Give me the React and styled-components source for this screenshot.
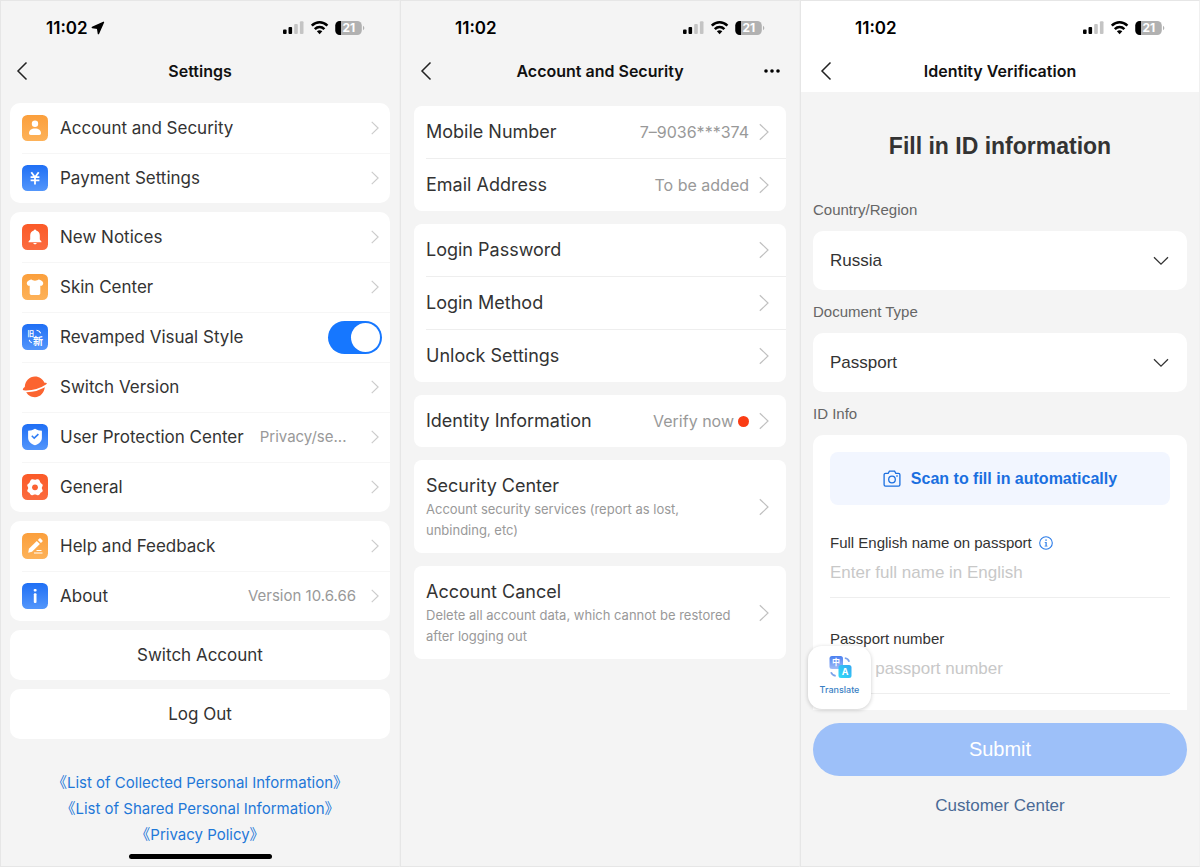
import styled, { createGlobalStyle } from 'styled-components';

const notices = [
    { icon: 'bell', label: 'New Notices' },
    { icon: 'shirt', label: 'Skin Center' },
    { icon: 'revamp', label: 'Revamped Visual Style', toggle: true },
    { icon: 'planet', label: 'Switch Version' },
    { icon: 'shield', label: 'User Protection Center', value: 'Privacy/se...', start: true },
    { icon: 'gear', label: 'General' },
];

const settings = [
    [
        { icon: 'user', label: 'Account and Security' },
        { icon: 'yen', label: 'Payment Settings' },
    ],
    notices,
    [
        { icon: 'pencil', label: 'Help and Feedback' },
        { icon: 'info', label: 'About', value: 'Version 10.6.66' },
    ],
];

const security = [
    [
        { label: 'Mobile Number', value: '7–9036***374' },
        { label: 'Email Address', value: 'To be added' },
    ],
    [
        { label: 'Login Password' },
        { label: 'Login Method' },
        { label: 'Unlock Settings' },
    ],
    [{ label: 'Identity Information', value: 'Verify now', dot: true }],
    [{ label: 'Security Center', note: 'Account security services (report as lost, unbinding, etc)' }],
    [{ label: 'Account Cancel', note: 'Delete all account data, which cannot be restored after logging out' }],
];

const policies = [
    '《List of Collected Personal Information》',
    '《List of Shared Personal Information》',
    '《Privacy Policy》',
];

const tiles = {
    orange: ['#fb9f3c', '#fdb259'],
    red: ['#fb5a28', '#fb6c40'],
    blue: ['#1f6ff5', '#5396fb'],
};

const glyphs = {
    user: ['orange', <g fill="#fff" key="g"><circle cx="13" cy="8.7" r="3.2" /><path d="M7 18.2c0-3 2.3-4.700 6-4.700s6 1.700 6 4.700c0 1.200-.6 1.700-1.700 1.700H8.700C7.600 19.900 7 19.400 7 18.200z" /></g>],
    yen: ['blue', <path key="g" d="M9.300 7.200l3.700 5 3.700-5M8.600 12.200h8.800M8.600 15.300h8.800M13 12v7.400" fill="none" stroke="#fff" strokeWidth="1.800" />],
    bell: ['red', <g fill="#fff" key="g"><path d="M13 5.500c.7 0 1.100.4 1.200 1 2.300.6 3.600 2.400 3.600 4.900v4l1.600 2c.3.500.1.900-.5.900H7.100c-.6 0-.8-.4-.5-.9l1.600-2v-4c0-2.500 1.300-4.300 3.600-4.900.1-.6.500-1 1.200-1z" /><path d="M11.200 19h3.600c-.3.900-.9 1.300-1.800 1.300s-1.500-.4-1.800-1.300z" /></g>],
    shirt: ['orange', <path key="g" d="M9.600 5.600c1 1.500 5.800 1.500 6.800 0 1.900.2 4 1.300 4.700 3 .3.900.1 1.700-.5 2.400-.6.700-1.600 1-2.300.8v7.500c0 1.100-.6 1.700-1.700 1.700H9.400c-1.100 0-1.700-.6-1.700-1.700v-7.500c-.7.200-1.700-.1-2.300-.8-.6-.7-.8-1.500-.5-2.400.7-1.700 2.800-2.800 4.700-3z" fill="#fff" />],
    revamp: ['blue', (
        <g fill="#fff" key="g" fontFamily="'Noto Sans CJK SC', sans-serif" fontWeight="700">
            <text x="5.500" y="11.500" fontSize="6.500">旧</text>
            <text x="11" y="20.500" fontSize="10">新</text>
            <path d="M14.500 6.300c2 .2 3.500 1.200 4.200 2.900M7.200 15.800c.4 1.400 1.300 2.500 2.600 3" fill="none" stroke="#fff" strokeWidth="1.100" />
        </g>
    )],
    shield: ['blue', (
        <g key="g">
            <path d="M13 4.800c2 1.300 4.200 1.900 6.900 1.900v7c0 3.400-2.600 6-6.900 7.600-4.300-1.600-6.900-4.200-6.900-7.600v-7c2.700 0 4.900-.6 6.900-1.900z" fill="#fff" />
            <path d="M9.800 11.800l2.400 2.400 4.200-4" fill="none" stroke="#2f7df6" strokeWidth="1.600" />
        </g>
    )],
    gear: ['red', (
        <g key="g">
            <path d="M9.800 5.300c1.300-.5 2 .4 3.200.4s1.900-.9 3.200-.4c1.700.7 1.500 2 2.200 3.100.6 1.100 2 1.300 2.300 2.600.2 1.400-.9 1.900-.9 3s1.100 1.600.9 3c-.3 1.300-1.700 1.100-2.300 2-.7 1.100-.5 1.700-2.200 2.200-1.300.4-2-.6-3.200-.6s-1.900 1-3.200.6c-1.700-.5-1.500-1.100-2.200-2.200-.6-.9-2-.7-2.300-2-.2-1.400.9-1.900.9-3s-1.100-1.600-.9-3c.3-1.300 1.700-1.500 2.300-2.600.7-1.100.5-2.400 2.200-3.100z" fill="#fff" />
            <circle cx="13" cy="13.300" r="2.900" fill="#fb6233" />
        </g>
    )],
    pencil: ['orange', (
        <g key="g" fill="#fff">
            <path d="M6.200 19.800l.7-4L14.800 8l3.100 3.100-7.900 7.700z" />
            <path d="M15.800 7l1.400-1.300c.5-.5 1.100-.5 1.600 0l1.500 1.500c.5.500.5 1.100 0 1.600L18.900 10z" />
            <path d="M14.500 17.500h5M12 20h8.500" stroke="#fff" strokeWidth="1.100" fill="none" />
        </g>
    )],
    info: ['blue', <g fill="#fff" key="g"><rect x="11.700" y="6" width="2.900" height="2.600" rx="1" /><rect x="11.800" y="10.200" width="2.700" height="9.800" rx="1" /></g>],
};

function TileIcon({ name }) {
    if (name === 'planet') {
        return (
            <Tile viewBox="0 0 26 26" aria-hidden="true">
                <path d="M.8 15.600c.3-1.200 1-2.100 2-2.600C3 7 7.500 2.500 13 2.500c4.200 0 7.900 2.600 9.500 6.300 1.400-.3 2.300.1 2.300.9 0 1.200-1.200 2.200-2 2.800-.2 6-4.500 10.700-9.900 10.700-4.200 0-7.700-2.400-9.300-6.200-1.600 0-2.600-.4-2.800-1.400z" fill="#fb6430" />
                <path d="M.5 17.200c8.500.8 17-1.200 24.800-6.400" fill="none" stroke="#fff" strokeWidth="1.700" />
            </Tile>
        );
    }
    const [tone, drawing] = glyphs[name];
    const [from, to] = tiles[tone];
    return (
        <Tile viewBox="0 0 26 26" aria-hidden="true">
            <defs>
                <linearGradient id={`tile-${name}`} x1="0" y1="0" x2="0" y2="1">
                    <stop offset="0" stopColor={from} />
                    <stop offset="1" stopColor={to} />
                </linearGradient>
            </defs>
            <rect width="26" height="26" rx="5.500" fill={`url(#tile-${name})`} />
            {drawing}
        </Tile>
    );
}

function Header({ title, located, more, white }) {
    return (
        <Head $white={white}>
            <Status $located={located}>
                <Time>
                    11:02
                    {located && (
                        <svg width="14" height="14" viewBox="0 0 14 14">
                            <path d="M12.500 1.300L1.300 6.500l5.300.800.800 5.300z" fill="#000" stroke="#000" strokeWidth="1.400" strokeLinejoin="round" />
                        </svg>
                    )}
                </Time>
                <svg width="82" height="16" viewBox="0 0 82 16">
                    <rect x="0" y="9.500" width="3.600" height="4.500" rx="1" />
                    <rect x="5.500" y="7" width="3.600" height="7" rx="1" />
                    <rect x="11.200" y="4" width="3.600" height="10" rx="1" fill="#c4c4c4" />
                    <rect x="16.900" y="1.200" width="3.600" height="12.800" rx="1" fill="#c4c4c4" />
                    <g fill="none" stroke="#000" strokeWidth="2.600">
                        <path d="M28.800 5.600C33.500 1.100 39.700 1.100 44.400 5.600" />
                        <path d="M31.800 9.100c2.800-2.700 6.800-2.700 9.600 0" />
                    </g>
                    <path d="M36.600 14.200l-2.700-2.900c1.600-1.300 3.800-1.300 5.400 0z" />
                    <rect x="52.300" y="1" width="26.500" height="14" rx="4.500" fill="#b1b1b1" />
                    <path d="M58 1v14h-1.200c-2.500 0-4.500-2-4.500-4.500v-5c0-2.500 2-4.500 4.500-4.500z" />
                    <path d="M80 5.800c1.800.7 1.800 3.700 0 4.400z" fill="#b1b1b1" />
                    <text x="65.800" y="12.200" fill="#fff" fontSize="12" fontWeight="700" textAnchor="middle" fontFamily="Inter, sans-serif">21</text>
                </svg>
            </Status>
            <Nav $tight={located}>
                <IconButton aria-label="Back">
                    <svg width="12" height="20" viewBox="0 0 12 20">
                        <path d="M10.500 1.500L2 10l8.500 8.500" fill="none" stroke="#222" strokeWidth="1.500" />
                    </svg>
                </IconButton>
                <Title>{title}</Title>
                {more && (
                    <IconButton aria-label="More" $end>
                        <svg width="16" height="6" viewBox="0 0 16 6">
                            <circle cx="2" cy="3" r="1.800" />
                            <circle cx="8" cy="3" r="1.800" />
                            <circle cx="14" cy="3" r="1.800" />
                        </svg>
                    </IconButton>
                )}
            </Nav>
        </Head>
    );
}

function Chevron({ large }) {
    return (
        <Arrow $large={large} viewBox="0 0 10 18" aria-hidden="true">
            <path d="M.8 1.200L9 9 .8 16.800" fill="none" stroke={large ? '#c0c0c0' : '#cccccc'} strokeWidth={large ? 1.200 : 1.500} />
        </Arrow>
    );
}

function SettingsPanel() {
    return (
        <Panel>
            <Header title="Settings" located />
            <SettingsBody>
                {settings.map((group, index) => (
                    <Card key={index}>
                        {group.map((item) => (
                            <Row key={item.label} as={item.toggle ? 'label' : 'button'}>
                                <TileIcon name={item.icon} />
                                <RowLine>
                                    <RowLabel>{item.label}</RowLabel>
                                    <Value $start={item.start}>{item.value}</Value>
                                    {item.toggle ? <Switch type="checkbox" role="switch" defaultChecked /> : <Chevron />}
                                </RowLine>
                            </Row>
                        ))}
                    </Card>
                ))}
                <CardButton>Switch Account</CardButton>
                <CardButton>Log Out</CardButton>
                <Policies>
                    {policies.map((text) => <a href="#" key={text}>{text}</a>)}
                </Policies>
            </SettingsBody>
            <HomeBar />
        </Panel>
    );
}

function SecurityPanel() {
    return (
        <Panel>
            <Header title="Account and Security" more />
            <SecurityBody>
                {security.map((group, index) => (
                    <SecurityCard key={index}>
                        {group.map((item) => (
                            <SecurityRow key={item.label} $tall={item.note}>
                                <SecurityText>
                                    <SecurityLabel>{item.label}</SecurityLabel>
                                    {item.note && <Note>{item.note}</Note>}
                                </SecurityText>
                                {item.value && <Value $large>{item.value}</Value>}
                                {item.dot && <Dot />}
                                <Chevron large />
                            </SecurityRow>
                        ))}
                    </SecurityCard>
                ))}
            </SecurityBody>
        </Panel>
    );
}

function Dropdown({ id, label, option }) {
    return (
        <>
            <GroupLabel htmlFor={id}>{label}</GroupLabel>
            <SelectBox>
                <select id={id}>
                    <option>{option}</option>
                </select>
                <svg width="16" height="10" viewBox="0 0 16 10" aria-hidden="true">
                    <path d="M1 1.200l7 7 7-7" fill="none" stroke="#333" strokeWidth="1.300" />
                </svg>
            </SelectBox>
        </>
    );
}

function VerificationPanel() {
    return (
        <Panel>
            <Header title="Identity Verification" white />
            <Form onSubmit={(e) => e.preventDefault()}>
                <Heading>Fill in ID information</Heading>
                <Dropdown id="country" label="Country/Region" option="Russia" />
                <Dropdown id="document" label="Document Type" option="Passport" />
                <GroupLabel as="div">ID Info</GroupLabel>
                <IdCard>
                    <Scan type="button">
                        <svg width="18" height="18" viewBox="0 0 18 18" fill="none" stroke="#1a6fe0" strokeWidth="1.300">
                            <path d="M2.500 3.300h2.700L6.400 1.200h5.200l1.200 2.100h2.700c.8 0 1.400.6 1.400 1.400v10.100c0 .8-.6 1.400-1.400 1.400h-13c-.8 0-1.400-.6-1.400-1.400V4.700c0-.8.600-1.400 1.400-1.400z" />
                            <circle cx="9" cy="9.500" r="3.300" />
                            <path d="M13.300 6h1.400" />
                        </svg>
                        Scan to fill in automatically
                    </Scan>
                    <Fields>
                        <Field>
                            <label htmlFor="name">
                                Full English name on passport
                                <svg width="14" height="14" viewBox="0 0 14 14">
                                    <circle cx="7" cy="7" r="6.300" fill="none" stroke="#2a7be8" strokeWidth="1.100" />
                                    <path d="M6.300 3.400h1.500v1.400H6.300zM5.700 6h2v3.700h.8v.8H5.600v-.8h.9V6.800h-.8z" fill="#2a7be8" />
                                </svg>
                            </label>
                            <input id="name" placeholder="Enter full name in English" />
                        </Field>
                        <Field>
                            <label htmlFor="number">Passport number</label>
                            <input id="number" placeholder="Enter passport number" />
                        </Field>
                    </Fields>
                    <Translate type="button">
                        <svg width="24" height="24" viewBox="0 0 24 24" aria-hidden="true">
                            <defs>
                                <linearGradient id="zh" x1="0" y1="0" x2="0" y2="1">
                                    <stop offset="0" stopColor="#4a7ff0" />
                                    <stop offset="1" stopColor="#a3bcf6" />
                                </linearGradient>
                                <linearGradient id="en" x1="0" y1="1" x2="1" y2="0">
                                    <stop offset="0" stopColor="#2fdcf8" />
                                    <stop offset="1" stopColor="#35a8f2" />
                                </linearGradient>
                            </defs>
                            <rect x="1.500" y="1" width="13.500" height="13" rx="2.500" fill="url(#zh)" />
                            <rect x="10.500" y="10" width="13" height="13" rx="2.500" fill="url(#en)" />
                            <text x="8" y="10.200" fontSize="8" fontWeight="700" fill="#fff" textAnchor="middle" fontFamily="'Noto Sans CJK SC', sans-serif">中</text>
                            <text x="17" y="19.800" fontSize="9" fontWeight="700" fill="#fff" textAnchor="middle" fontFamily="Inter, sans-serif">A</text>
                            <path d="M16.800 3c2.300.3 3.700 1.500 4.400 3.700M3 17.300c.7 2 2.200 3.200 4.700 3.600" fill="none" stroke="#7aa2ea" strokeWidth="1.700" />
                        </svg>
                        Translate
                    </Translate>
                </IdCard>
                <Submit>Submit</Submit>
                <Support href="#">Customer Center</Support>
            </Form>
        </Panel>
    );
}

export default function App() {
    return (
        <>
            <GlobalStyle />
            <Page>
                <SettingsPanel />
                <SecurityPanel />
                <VerificationPanel />
            </Page>
        </>
    );
}

const GlobalStyle = createGlobalStyle`
    * {
        box-sizing: border-box;
    }

    body {
        margin: 0;
        background: #f4f4f4;
        font-family: Inter, 'Noto Sans CJK SC', sans-serif;
        color: #333333;
    }

    button, input, select {
        font-family: inherit;
        color: inherit;
        border: 0;
        padding: 0;
        margin: 0;
        background: none;
    }

    a {
        text-decoration: none;
    }

    svg {
        flex-shrink: 0;
    }
`;

const Page = styled.main`
    display: grid;
    grid-template-columns: repeat(3, 1fr);
    min-height: 100vh;
`;

const Panel = styled.section`
    display: flex;
    flex-direction: column;
    background: #f4f4f4;
    border: 1px solid #e6e6e6;
    border-right-color: #f0f0f0;
`;

const Head = styled.header`
    background: ${({ $white }) => ($white ? '#ffffff' : 'transparent')};
    padding-bottom: 5px;
`;

const Status = styled.div`
    height: 54px;
    display: flex;
    align-items: center;
    justify-content: space-between;
    padding: 0 34px 0 ${({ $located }) => ($located ? '45px' : '54px')};
`;

const Time = styled.span`
    display: flex;
    align-items: center;
    gap: 3px;
    font-size: 17px;
    font-weight: 600;
    color: #000000;
`;

const Nav = styled.div`
    height: 32px;
    display: grid;
    grid-template-columns: 24px 1fr 24px;
    align-items: center;
    padding: 0 ${({ $tight }) => ($tight ? '15px' : '19px')};
`;

const IconButton = styled.button`
    height: 32px;
    display: flex;
    align-items: center;
    justify-content: ${({ $end }) => ($end ? 'flex-end' : 'flex-start')};
    cursor: pointer;
`;

const Title = styled.h2`
    margin: 0;
    font-size: 16px;
    font-weight: 600;
    text-align: center;
    color: #111111;
`;

const SettingsBody = styled.div`
    flex: 1;
    display: flex;
    flex-direction: column;
    gap: 9px;
    padding: 11px 9px 5px;
`;

const Card = styled.div`
    background: #ffffff;
    border-radius: 10px;
    overflow: hidden;
`;

const Row = styled.button`
    width: 100%;
    height: 50px;
    display: flex;
    align-items: center;
    gap: 12px;
    padding-left: 12px;
    background: linear-gradient(#f6f6f6, #f6f6f6) 12px 0 / 100% 1px no-repeat;
    text-align: left;
    cursor: pointer;

    &:first-child {
        background: none;
    }
`;

const Tile = styled.svg`
    width: 26px;
    height: 26px;
`;

const RowLine = styled.span`
    flex: 1;
    display: flex;
    align-items: center;
    padding-right: 8px;
`;

const RowLabel = styled.span`
    font-size: 17px;
    line-height: 24px;
    white-space: nowrap;
`;

const Value = styled.span`
    flex: 1;
    padding-left: 16px;
    font-size: ${({ $large }) => ($large ? '16px' : '15px')};
    line-height: 24px;
    text-align: ${({ $start }) => ($start ? 'left' : 'right')};
    white-space: nowrap;
    color: #999999;
`;

const Arrow = styled.svg`
    width: ${({ $large }) => ($large ? '10px' : '8px')};
    height: ${({ $large }) => ($large ? '18px' : '14px')};
    margin-left: ${({ $large }) => ($large ? '10px' : '15px')};
    margin-right: ${({ $large }) => ($large ? '0' : '3px')};
`;

const Switch = styled.input`
    appearance: none;
    width: 54px;
    height: 33px;
    display: flex;
    align-items: center;
    justify-content: flex-end;
    padding: 0 2px;
    border-radius: 17px;
    background: #1677ff;
    cursor: pointer;

    &::before {
        content: '';
        width: 29px;
        height: 29px;
        border-radius: 50%;
        background: #ffffff;
    }

    &:not(:checked) {
        justify-content: flex-start;
        background: #dddddd;
    }
`;

const CardButton = styled.button`
    height: 50px;
    border-radius: 10px;
    background: #ffffff;
    font-size: 17px;
    cursor: pointer;
`;

const Policies = styled.nav`
    display: flex;
    flex-direction: column;
    align-items: center;
    margin-top: 22px;

    a {
        font-size: 15px;
        line-height: 26px;
        color: #1f78d8;
    }
`;

const HomeBar = styled.div`
    width: 143px;
    height: 5px;
    margin: 0 auto 7px;
    border-radius: 3px;
    background: #000000;
`;

const SecurityBody = styled.div`
    display: flex;
    flex-direction: column;
    gap: 13px;
    padding: 14px 13px;
`;

const SecurityCard = styled.div`
    background: #ffffff;
    border-radius: 8px;
`;

const SecurityRow = styled.button`
    width: 100%;
    min-height: ${({ $tall }) => ($tall ? '93px' : '52px')};
    display: flex;
    align-items: center;
    justify-content: space-between;
    padding: 0 17px 0 12px;
    text-align: left;
    cursor: pointer;

    & + & {
        min-height: 53px;
        background: linear-gradient(#eeeeee, #eeeeee) 12px 0 / 100% 1px no-repeat;
    }
`;

const SecurityText = styled.span`
    max-width: 320px;
    display: flex;
    flex-direction: column;
`;

const SecurityLabel = styled.span`
    font-size: 18px;
    line-height: 26px;
`;

const Note = styled.span`
    font-size: 13px;
    line-height: 21px;
    color: #999999;
`;

const Dot = styled.span`
    width: 11px;
    height: 11px;
    margin-left: 4px;
    border-radius: 50%;
    background: #fa3c14;
`;

const Form = styled.form`
    display: flex;
    flex-direction: column;
    padding: 38px 12px 0;
    font-family: 'Liberation Sans', Arial, sans-serif;
`;

const Heading = styled.h1`
    margin: 0 0 26px;
    font-size: 23px;
    line-height: 32px;
    font-weight: 700;
    text-align: center;
`;

const GroupLabel = styled.label`
    margin: 12px 0 11px;
    font-size: 15px;
    line-height: 20px;
    color: #666666;
`;

const SelectBox = styled.div`
    display: grid;
    align-items: center;
    background: #ffffff;
    border-radius: 10px;

    select, svg {
        grid-area: 1 / 1;
    }

    select {
        appearance: none;
        height: 59px;
        padding: 0 17px;
        font-size: 17px;
        border-radius: 10px;
    }

    svg {
        justify-self: end;
        margin-right: 18px;
        pointer-events: none;
    }
`;

const IdCard = styled.div`
    position: relative;
    padding: 17px 17px 16px;
    background: #ffffff;
    border-radius: 10px 10px 0 0;
`;

const Scan = styled.button`
    width: 100%;
    height: 53px;
    display: flex;
    align-items: center;
    justify-content: center;
    gap: 10px;
    border-radius: 8px;
    background: #f2f6ff;
    font-size: 16px;
    font-weight: 700;
    color: #1a6fe0;
    cursor: pointer;
`;

const Fields = styled.div`
    display: flex;
    flex-direction: column;
    gap: 31px;
    padding-top: 28px;
`;

const Field = styled.div`
    display: flex;
    flex-direction: column;

    label {
        display: flex;
        align-items: center;
        gap: 7px;
        font-size: 15px;
        line-height: 20px;
    }

    input {
        height: 45px;
        padding-bottom: 4px;
        border-bottom: 1px solid #eeeeee;
        font-size: 17px;
        outline: none;
    }

    input::placeholder {
        color: #c8c8c8;
    }
`;

const Translate = styled.button`
    position: absolute;
    left: -5px;
    bottom: 1px;
    width: 63px;
    height: 63px;
    display: flex;
    flex-direction: column;
    align-items: center;
    gap: 5px;
    padding-top: 9px;
    border-radius: 14px;
    background: #ffffff;
    box-shadow: 0 1px 4px rgba(0, 0, 0, 0.2);
    font-family: Inter, sans-serif;
    font-size: 9px;
    font-weight: 500;
    color: #3a7fc4;
    cursor: pointer;
`;

const Submit = styled.button`
    height: 53px;
    margin: 13px 0 20px;
    border-radius: 27px;
    background: #9dc0f9;
    font-size: 20px;
    color: #ffffff;
    cursor: pointer;
`;

const Support = styled.a`
    font-size: 17px;
    line-height: 20px;
    text-align: center;
    color: #4a6a96;
`;
